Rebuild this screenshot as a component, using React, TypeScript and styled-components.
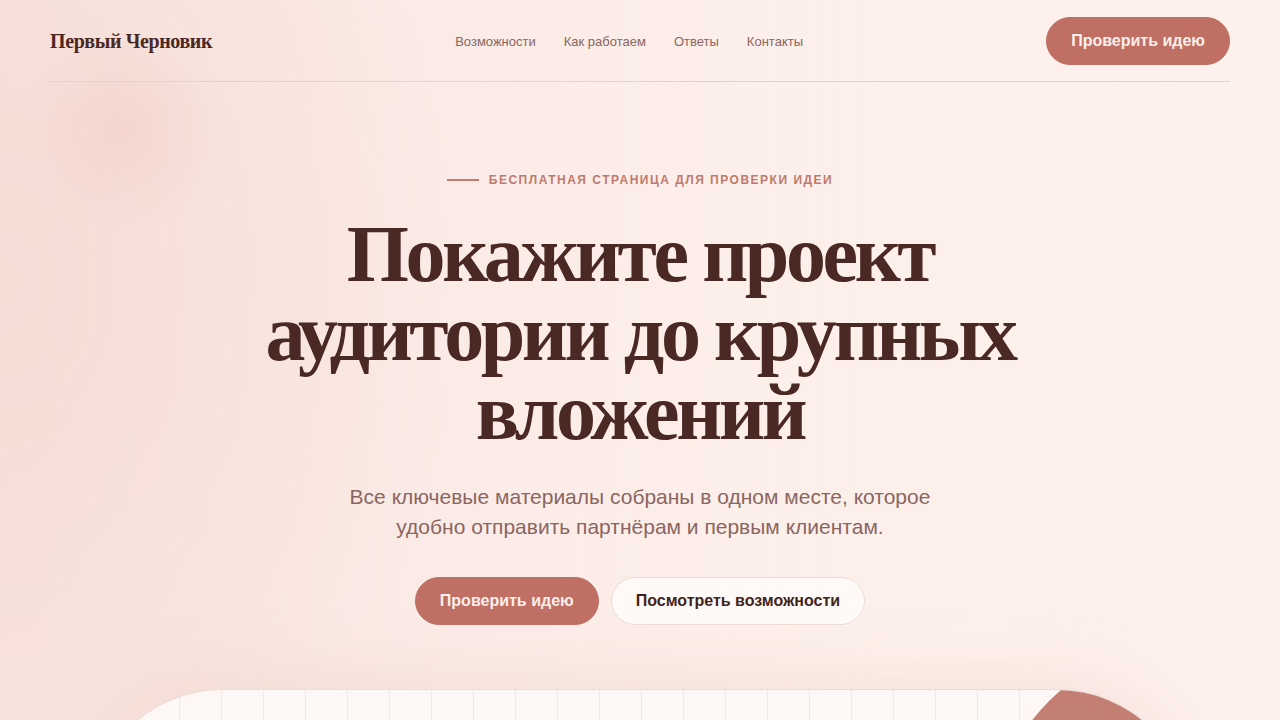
import React from "react";
import styled, { createGlobalStyle } from "styled-components";

const Global = createGlobalStyle`
  html, body { margin: 0; padding: 0; }
  body {
    width: 1280px;
    height: 720px;
    overflow: hidden;
    font-family: "Liberation Sans", Arial, sans-serif;
    background: #fcefea;
  }
  * { box-sizing: border-box; }
`;

const Page = styled.div`
  position: relative;
  width: 1280px;
  height: 720px;
  overflow: hidden;
  background:
    radial-gradient(circle at 120px 130px, rgba(240, 200, 193, 0.45) 0, rgba(240, 200, 193, 0) 100px),
    radial-gradient(ellipse 460px 600px at 0px 280px, rgba(244, 216, 209, 0.65) 0, rgba(244, 216, 209, 0) 100%),
    linear-gradient(90deg, #f8e4de 0%, #fbebe6 35%, #fdf0eb 70%, #fdf1ed 100%);
`;

const Header = styled.header`
  margin: 0 50px;
  padding: 17px 0 16px;
  display: flex;
  align-items: center;
  justify-content: space-between;
  border-bottom: 1px solid #e6d1cc;
`;

const Logo = styled.div`
  font-family: "Liberation Serif", "Times New Roman", serif;
  font-weight: 700;
  font-size: 20px;
  letter-spacing: -0.4px;
  color: #4a2824;
`;

const Nav = styled.nav`
  display: flex;
  gap: 28px;
`;

const NavLink = styled.a`
  font-size: 13px;
  color: #8a6661;
  text-decoration: none;
`;

const Button = styled.button<{ $variant?: "primary" | "ghost" }>`
  height: 48px;
  padding: 0 ${(p) => (p.$variant === "ghost" ? "24px" : "24px")};
  border-radius: 24px;
  font-family: "Liberation Sans", Arial, sans-serif;
  font-weight: 700;
  font-size: 16px;
  cursor: pointer;
  border: 1px solid ${(p) => (p.$variant === "ghost" ? "#eddcd7" : "#bf6f64")};
  background: ${(p) => (p.$variant === "ghost" ? "#fffaf8" : "#bf6f64")};
  color: ${(p) => (p.$variant === "ghost" ? "#3f2420" : "#fdeee9")};
`;

const Hero = styled.section`
  display: flex;
  flex-direction: column;
  align-items: center;
  padding-top: 90px;
`;

const Eyebrow = styled.div`
  display: flex;
  align-items: center;
  gap: 10px;
  font-size: 12px;
  font-weight: 700;
  letter-spacing: 1.5px;
  color: #c07a6e;
  height: 16px;
  &::before {
    content: "";
    width: 32px;
    height: 2px;
    background: #c07a6e;
  }
`;

const Title = styled.h1`
  margin: 27px 0 0;
  text-align: center;
  font-family: "Liberation Serif", "Times New Roman", serif;
  font-weight: 700;
  font-size: 80px;
  line-height: 79px;
  letter-spacing: -3.4px;
  color: #4a2824;
  max-width: 820px;
`;

const Lead = styled.p`
  margin: 30px 0 0;
  max-width: 640px;
  text-align: center;
  font-size: 21px;
  line-height: 30px;
  color: #8a6661;
`;

const Actions = styled.div`
  margin-top: 35px;
  display: flex;
  gap: 12px;
`;

const Showcase = styled.div`
  position: relative;
  margin: 64px auto 0;
  width: 1104px;
  height: 360px;
  border-radius: 135px;
  border: 1px solid #ecdcd7;
  overflow: hidden;
  background-color: #fdf8f6;
  background-image: linear-gradient(90deg, #f2e7e3 1px, transparent 1px);
  background-size: 42px 100%;
  background-position: 6px 0;
  box-shadow: 0 -10px 60px rgba(236, 200, 190, 0.35);
`;

const Blob = styled.div`
  position: absolute;
  width: 424px;
  height: 424px;
  border-radius: 50%;
  top: -51px;
  right: -220px;
  background: #c47f74;
`;

export default function App() {
  return (
    <>
      <Global />
      <Page>
        <Header>
          <Logo>Первый Черновик</Logo>
          <Nav>
            <NavLink href="#">Возможности</NavLink>
            <NavLink href="#">Как работаем</NavLink>
            <NavLink href="#">Ответы</NavLink>
            <NavLink href="#">Контакты</NavLink>
          </Nav>
          <Button>Проверить идею</Button>
        </Header>
        <Hero>
          <Eyebrow>БЕСПЛАТНАЯ СТРАНИЦА ДЛЯ ПРОВЕРКИ ИДЕИ</Eyebrow>
          <Title>
            Покажите проект аудитории до крупных вложений
          </Title>
          <Lead>
            Все ключевые материалы собраны в одном месте, которое удобно
            отправить партнёрам и первым клиентам.
          </Lead>
          <Actions>
            <Button>Проверить идею</Button>
            <Button $variant="ghost">Посмотреть возможности</Button>
          </Actions>
        </Hero>
        <Showcase>
          <Blob />
        </Showcase>
      </Page>
    </>
  );
}
